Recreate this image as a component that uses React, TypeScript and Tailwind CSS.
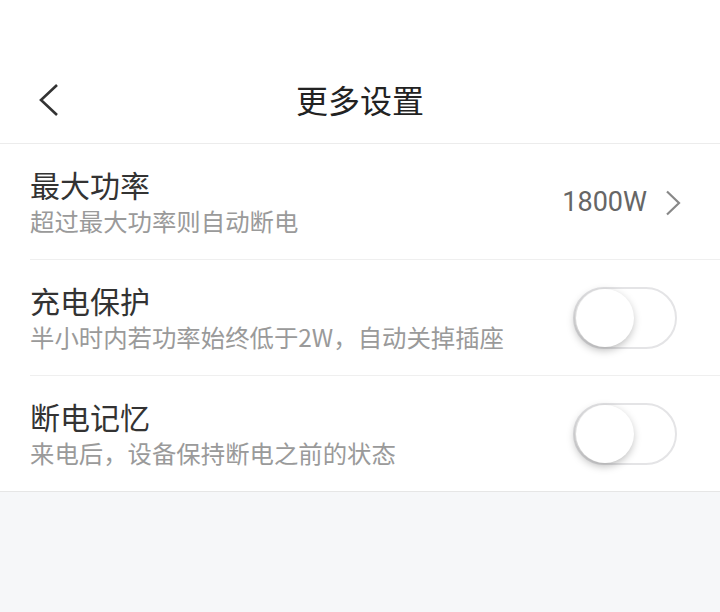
type Item = {
  title: string
  desc: string
  value?: string
}

const items: Item[] = [
  { title: "最大功率", desc: "超过最大功率则自动断电", value: "1800W" },
  { title: "充电保护", desc: "半小时内若功率始终低于2W，自动关掉插座" },
  { title: "断电记忆", desc: "来电后，设备保持断电之前的状态" },
]

function Toggle() {
  return (
    <div className="w-[104px] h-[62px] rounded-full border-2 border-[#e4e4e6] bg-white flex items-center px-[1px]">
      <div className="w-[58px] h-[58px] rounded-full bg-white shadow-[-1px_3px_8px_rgba(0,0,0,0.28)]" />
    </div>
  )
}

export default function App() {
  return (
    <div
      className="w-[720px] h-[612px] bg-[#f6f7f9] flex flex-col"
      style={{ fontFamily: '"Noto Sans CJK SC", "Noto Sans", sans-serif' }}
    >
      <div className="bg-white pt-[56px]">
        <div className="h-[87px] flex items-center justify-center relative">
          <svg className="absolute left-[38px] top-[27px] w-[22px] h-[34px]" viewBox="0 0 22 34" fill="none">
            <polyline points="19,2 3,17 19,32" stroke="#333" strokeWidth="2.6" strokeLinejoin="miter" />
          </svg>
          <span className="text-[32px] text-[#222] leading-none -mt-[1px]">更多设置</span>
        </div>
      </div>
      <div className="h-px bg-[#ececec]" />
      <div className="bg-white">
        {items.map((item, i) => (
          <div key={item.title} className="pl-[30px]">
            <div className="h-[115px] flex items-center pr-[43px]">
              <div className="flex-1 flex flex-col">
                <span className="text-[30px] leading-[36px] text-[#333]">{item.title}</span>
                <span className="text-[24.4px] leading-[34px] text-[#9a9a9a] mt-[2px]">{item.desc}</span>
              </div>
              {item.value ? (
                <div className="flex items-center gap-[18px] -mr-[4px] mt-[2px]">
                  <span className="text-[27px] text-[#666]" style={{ fontFamily: "Roboto, sans-serif" }}>
                    {item.value}
                  </span>
                  <svg className="w-[16px] h-[26px]" viewBox="0 0 16 26" fill="none">
                    <polyline points="2,1.5 14,13 2,24.5" stroke="#888" strokeWidth="2.2" />
                  </svg>
                </div>
              ) : (
                <Toggle />
              )}
            </div>
            {i < items.length - 1 && <div className="h-px bg-[#efefef]" />}
          </div>
        ))}
      </div>
      <div className="h-px bg-[#e6e6e6]" />
    </div>
  )
}
